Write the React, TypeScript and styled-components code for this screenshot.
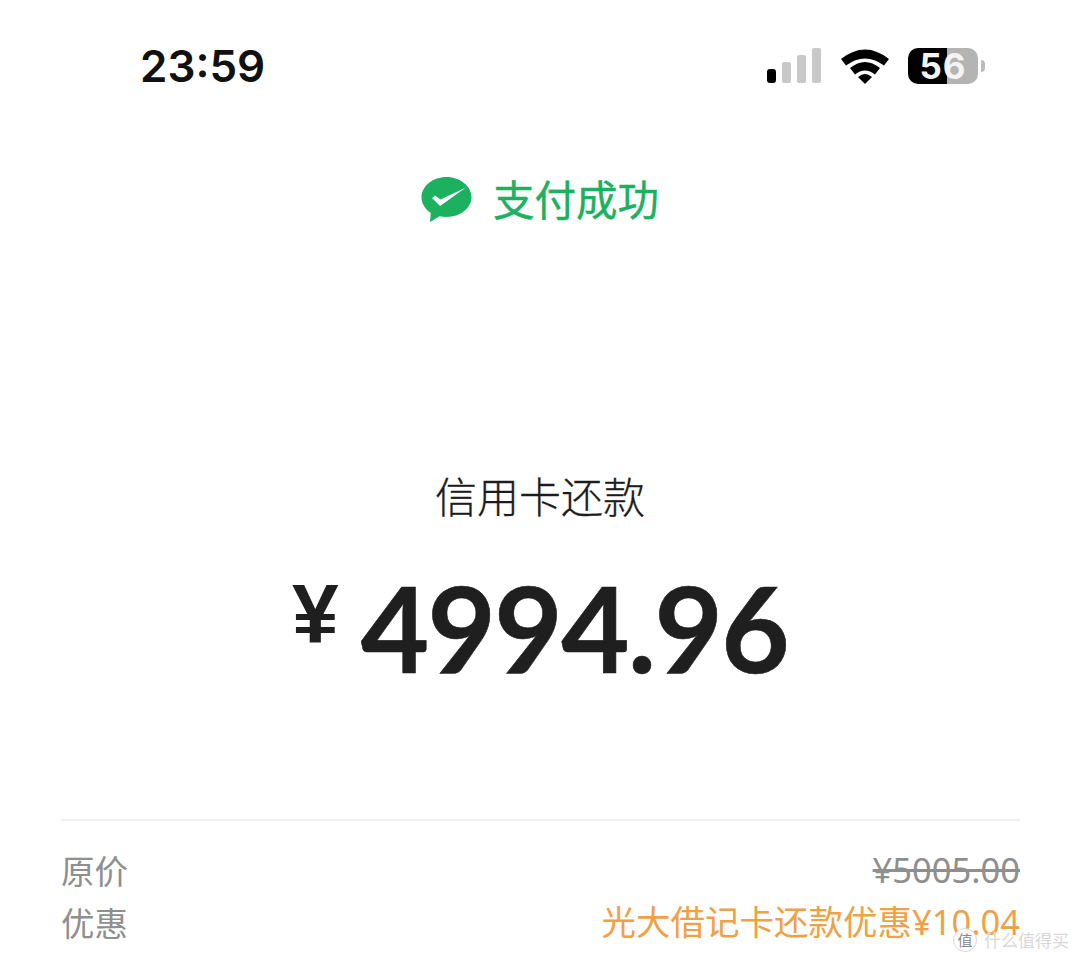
import React from "react";
import styled, { createGlobalStyle } from "styled-components";

const CJK = `"Noto Sans CJK SC", sans-serif`;

const GlobalStyle = createGlobalStyle`
  html, body {
    margin: 0;
    padding: 0;
    background: #fff;
  }
`;

const Page = styled.div`
  position: relative;
  width: 1080px;
  height: 962px;
  overflow: hidden;
  background: #fff;
  font-family: "Liberation Sans", ${CJK};
`;

const StatusBar = styled.div`
  display: flex;
  align-items: center;
  justify-content: space-between;
  height: 44px;
  padding: 44px 102px 0 140px;
`;

const Clock = styled.div`
  font-family: Inter, sans-serif;
  font-size: 44px;
  font-weight: 600;
  color: #111;
`;

const StatusIcons = styled.div`
  display: flex;
  align-items: center;
  gap: 18px;
`;

const Battery = styled.div`
  position: relative;
  width: 70px;
  height: 36px;
  border-radius: 10px;
  background: linear-gradient(to right, #000 0, #000 39px, #b4b4b4 39px);
  color: #f4f4f4;
  font-family: Inter, sans-serif;
  font-size: 35px;
  font-weight: 700;
  letter-spacing: 1px;
  line-height: 36px;
  text-align: center;

  &::after {
    content: "";
    position: absolute;
    right: -7px;
    top: 12px;
    width: 4px;
    height: 12px;
    border-radius: 0 4px 4px 0;
    background: #bbb;
  }
`;

const Result = styled.div`
  display: flex;
  align-items: center;
  justify-content: center;
  gap: 21px;
  margin-top: 82px;
`;

const ResultText = styled.div`
  font-family: ${CJK};
  font-size: 41.5px;
  font-weight: 400;
  line-height: 56px;
  color: #1bb15e;
  -webkit-text-stroke: 0.4px #1bb15e;
`;

const Merchant = styled.div`
  margin-top: 239px;
  font-family: ${CJK};
  font-size: 42px;
  font-weight: 300;
  line-height: 60px;
  text-align: center;
  color: #1c1c1c;
  -webkit-text-stroke: 0.3px #1c1c1c;
`;

const Amount = styled.div`
  display: flex;
  justify-content: center;
  align-items: flex-start;
  gap: 22px;
  margin-top: 33px;
  color: #1f1f1f;
  font-family: Lato, sans-serif;
  font-weight: 700;
`;

const Currency = styled.span`
  font-family: "Liberation Sans", sans-serif;
  font-size: 84px;
  font-weight: 700;
  line-height: 112px;
`;

const Figure = styled.span`
  font-size: 118px;
  line-height: 140px;
  letter-spacing: -1.6px;
  -webkit-text-stroke: 0.6px #1f1f1f;
`;

const Details = styled.div`
  margin: 121px 60px 0 61px;
  padding-top: 23px;
  border-top: 2px solid #efefef;
`;

const Row = styled.div`
  display: flex;
  justify-content: space-between;
  font-family: "Noto Sans", ${CJK};
  font-size: 34.5px;
  line-height: 52px;
`;

const Label = styled.span`
  font-family: ${CJK};
  font-size: 33.5px;
  color: #8f8f8f;
`;

const Value = styled.span<{ $tone: "muted" | "offer" }>`
  color: ${(p) => (p.$tone === "offer" ? "#f0a143" : "#8f8f8f")};
  text-decoration: ${(p) => (p.$tone === "muted" ? "line-through" : "none")};
  text-decoration-thickness: 3px;
`;

const Watermark = styled.div`
  position: absolute;
  left: 953px;
  top: 928px;
  display: flex;
  align-items: center;
  gap: 7px;
  color: #d8d8d8;
  text-shadow: 0 0 2px #fff, 0 0 2px #fff;
  font-family: ${CJK};
  font-size: 17px;
  line-height: 24px;
  white-space: nowrap;
`;

const WatermarkBadge = styled.span`
  width: 22px;
  height: 22px;
  border: 1px solid #d8d8d8;
  border-radius: 50%;
  background: rgba(255, 255, 255, 0.85);
  color: #8a8a8a;
  font-size: 15px;
  line-height: 22px;
  text-align: center;
`;

const PayMark = styled.svg`
  margin-top: 4px;
`;

function SignalIcon() {
  return (
    <svg width="56" height="36" viewBox="0 0 56 36">
      <rect x="1" y="21" width="9" height="14" rx="3" fill="#000" />
      <rect x="16" y="14" width="9" height="21" rx="2" fill="#c8c8c8" />
      <rect x="31" y="7" width="9" height="28" rx="2" fill="#c8c8c8" />
      <rect x="46" y="0" width="9" height="35" rx="2" fill="#c8c8c8" />
    </svg>
  );
}

function WifiIcon() {
  return (
    <svg width="50" height="36" viewBox="0 0 50 36">
      <path d="M1 11 Q25 -8 49 11 L44 17.5 Q25 3.5 6 17.5 Z" fill="#000" />
      <path d="M10 20 Q25 8 40 20 L35 26.5 Q25 18.5 15 26.5 Z" fill="#000" />
      <path d="M18 29 Q25 23 32 29 L25 36 Z" fill="#000" />
    </svg>
  );
}

function WeChatPayIcon() {
  return (
    <PayMark width="51" height="46" viewBox="0 0 51 46">
      <path
        d="M25.5 0C11.6 0 .5 9.1.5 20.3c0 6.4 3.6 12 9.3 15.7L9 45l9.6-5.7c2.2.5 4.5.7 6.9.7 13.9 0 25-9 25-19.7S39.4 0 25.5 0Z"
        fill="#1bb15e"
      />
      <path d="M11 21 14 18.5 19.5 22.5 45 10.5 19 29Z" fill="#fff" />
    </PayMark>
  );
}

export default function App() {
  return (
    <Page>
      <GlobalStyle />
      <StatusBar>
        <Clock>23:59</Clock>
        <StatusIcons>
          <SignalIcon />
          <WifiIcon />
          <Battery>56</Battery>
        </StatusIcons>
      </StatusBar>
      <Result>
        <WeChatPayIcon />
        <ResultText>支付成功</ResultText>
      </Result>
      <Merchant>信用卡还款</Merchant>
      <Amount>
        <Currency>¥</Currency>
        <Figure>4994.96</Figure>
      </Amount>
      <Details>
        <Row>
          <Label>原价</Label>
          <Value $tone="muted">¥5005.00</Value>
        </Row>
        <Row>
          <Label>优惠</Label>
          <Value $tone="offer">光大借记卡还款优惠¥10.04</Value>
        </Row>
      </Details>
      <Watermark>
        <WatermarkBadge>值</WatermarkBadge>
        什么值得买
      </Watermark>
    </Page>
  );
}
